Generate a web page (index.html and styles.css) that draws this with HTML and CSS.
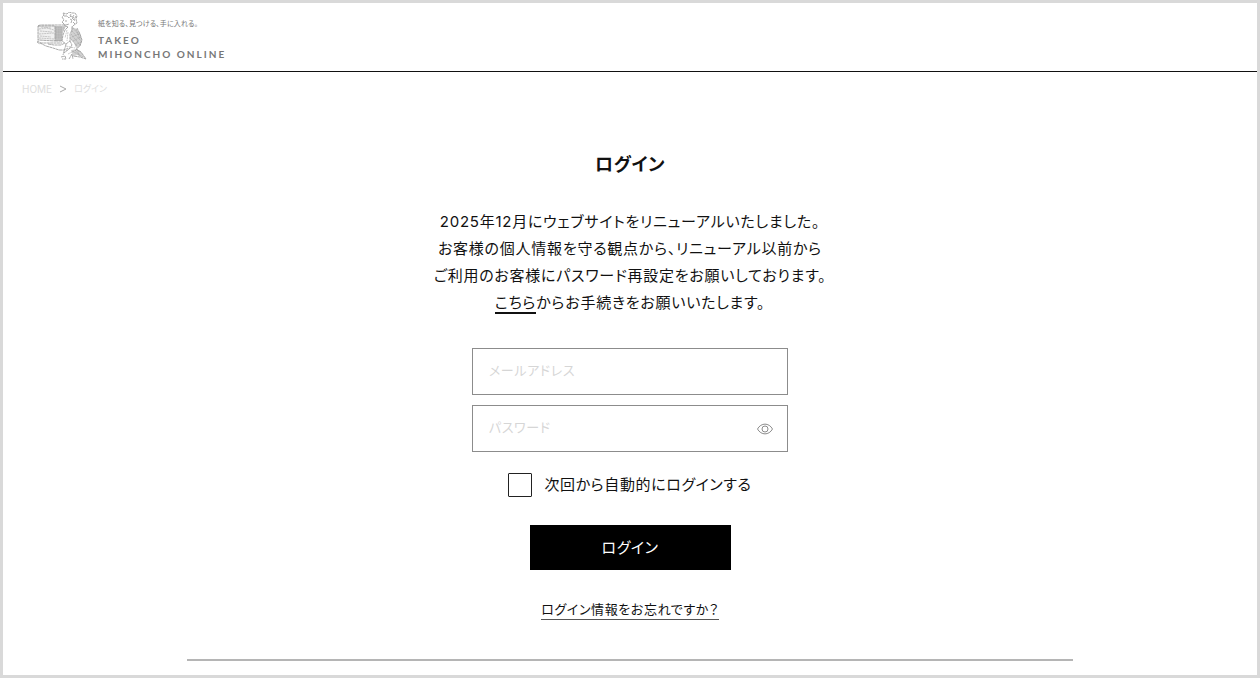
FILE: index.html
```html
<!DOCTYPE html>
<html lang="ja">
<head>
<meta charset="utf-8">
<meta name="viewport" content="width=device-width, initial-scale=1">
<title>ログイン | TAKEO MIHONCHO ONLINE</title>
<link rel="stylesheet" href="styles.css">
</head>
<body>
<header class="header">
  <a class="brand" href="#">
    <svg class="brand-mark" viewBox="0 0 50 48" aria-hidden="true">
      <path class="fill-box" d="M18 14L29 14L26 20L25 29L18 29Z"/>
      <path class="fill-paper" d="M1 14L18 14L18 29L1 28Z"/>
      <path class="fill-coat" d="M35 15L40 17L43 22L45 29L43 34L39 36L37 31L33 27L34 21Z"/>
      <path class="fill-coat" d="M34 38L40 37L44 40L48 46L41 43L36 44Z"/>
      <path class="line" d="M1 14L18 14L18 29L1 28ZM1 14L3 13L29 13M0 29L4 31L25 31M0 30L3 32M18 29L25 29"/>
      <path class="line" d="M3 31L9 34L16 36L22 38L28 38L31 36M11 32L17 33L24 33L28 31"/>
      <path class="hatch" d="M2 17L10 16L17 18M3 19L15 20M2 22L17 21M3 24L14 25M2 26L17 27M4 15L14 16M18 16L28 16M18 18L27 18M18 20L26 20M18 22L26 22M18 24L25 24M18 26L25 26M20 14L20 29M22 14L22 29M24 14L24 29"/>
      <path class="line" d="M27 12L25 10L27 8L25 5L27 3L26 1L30 2L32 0L35 1L38 1L40 4L39 7L40 11L37 13L35 15M27 12L28 14L31 15M27 4L30 4L32 6L34 4L37 6M33 7L35 8L34 11M28 9L30 9M29 13L32 12M37 3L35 6L38 9M34 2L33 4M39 4L37 8M36 10L38 12"/>
      <path class="line" d="M31 15L28 18L26 23L25 29L29 32L33 29L33 22L35 18L35 14M40 16L43 22L45 28L43 34L39 37M29 32L28 36L26 43M33 29L35 33L32 37L27 41M39 37L44 40L49 47L43 45L36 44"/>
      <path class="line" d="M24 45L28 44L29 47L25 47M32 47L35 42L36 47"/>
      <path class="hatch" d="M36 16L42 23M35 19L44 29M34 22L43 33M39 17L43 27M34 27L40 34M35 25L43 21M36 29L44 25M38 33L44 30M35 39L46 45M38 38L44 45M41 38L42 44M30 18L28 26M31 20L30 29M29 34L38 36M29 39L35 35M31 42L39 38"/>
    </svg>
    <span class="brand-text">
      <span class="tagline">紙を知る、見つける、手に入れる。</span>
      <span class="brand-name">TAKEO<br>MIHONCHO ONLINE</span>
    </span>
  </a>
</header>
<nav class="breadcrumb" aria-label="パンくず">
  <a href="#">HOME</a>
  <svg class="chevron" viewBox="0 0 8 8" aria-hidden="true"><path d="M1 1L7 4L1 7"/></svg>
  <span class="current">ログイン</span>
</nav>
<main class="main">
  <h1 class="title">ログイン</h1>
  <p class="notice">2025年12月にウェブサイトをリニューアルいたしました。<br>お客様の個人情報を守る観点から、リニューアル以前から<br>ご利用のお客様にパスワード再設定をお願いしております。<br><a class="reset-link" href="#">こちら</a>からお手続きをお願いいたします。</p>
  <form class="form">
    <div class="fields">
      <input class="field" type="email" aria-label="メールアドレス" placeholder="メールアドレス">
      <div class="password">
        <input class="field" type="password" aria-label="パスワード" placeholder="パスワード">
        <button class="reveal" type="button" aria-label="パスワードを表示">
          <svg viewBox="0 0 16 12" aria-hidden="true"><path d="M.5 6C4-.5 12-.5 15.500 6C12 12.500 4 12.500 .5 6Z"/><circle cx="8" cy="6" r="3"/></svg>
        </button>
      </div>
    </div>
    <label class="remember"><input class="checkbox" type="checkbox"><span>次回から自動的にログインする</span></label>
    <button class="submit" type="submit">ログイン</button>
  </form>
  <a class="forgot" href="#">ログイン情報をお忘れですか？</a>
  <hr class="rule">
</main>
</body>
</html>
```
FILE: styles.css
```css
* {
  box-sizing: border-box;
}

body {
  margin: 0;
  min-height: 100vh;
  border: 3px solid #d9d9d9;
  background: #fff;
  color: #111;
  font-family: Inter, "Noto Sans CJK JP", sans-serif;
  font-feature-settings: "palt";
  font-size: 15px;
  letter-spacing: 0.04em;
}

a {
  color: inherit;
  text-decoration: none;
}

button,
input {
  font: inherit;
  font-feature-settings: inherit;
  letter-spacing: inherit;
}

.header {
  padding: 9px 34px 11px;
  border-bottom: 1px solid #111;
}

.brand {
  display: inline-flex;
  align-items: flex-end;
  gap: 11px;
  vertical-align: top;
  color: #777;
}

.brand-mark {
  width: 50px;
  height: 48px;
  fill: none;
  stroke-linejoin: round;
}

.fill-box {
  fill: #ccc;
}

.fill-paper {
  fill: #f0f0f0;
}

.fill-coat {
  fill: #d2d2d2;
}

.line {
  stroke: #888;
  stroke-width: 0.7;
  stroke-dasharray: 3 0.4;
}

.hatch {
  stroke: #999;
  stroke-width: 0.5;
  stroke-dasharray: 2 0.6;
}

.brand-text {
  display: flex;
  flex-direction: column;
  gap: 4px;
}

.tagline {
  font-size: 7px;
  line-height: 10px;
  letter-spacing: 0.02em;
}

.brand-name {
  margin-bottom: -1px;
  font-family: Lato, sans-serif;
  font-size: 10px;
  font-weight: 700;
  line-height: 14px;
  letter-spacing: 0.2em;
}

.breadcrumb {
  display: flex;
  align-items: center;
  gap: 7px;
  padding: 9px 19px 7px;
  color: #ddd;
  font-size: 10px;
  line-height: 16px;
  letter-spacing: 0;
}

.current {
  font-size: 9px;
}

.chevron {
  width: 8px;
  height: 8px;
  fill: none;
  stroke: #aaa;
}

.main {
  display: flex;
  flex-direction: column;
  align-items: center;
  padding: 45px 24px 12px;
}

.title {
  margin: 0;
  font-size: 18px;
  font-weight: 600;
  line-height: 32px;
}

.notice {
  margin: 27px 0 0;
  letter-spacing: 0.05em;
  line-height: 27px;
  text-align: center;
}

.reset-link {
  border-bottom: 2px solid #111;
}

.form {
  display: flex;
  flex-direction: column;
  align-items: center;
  width: 100%;
  margin-top: 32px;
}

.fields {
  display: grid;
  gap: 10px;
  width: 100%;
  max-width: 316px;
}

.field {
  display: block;
  width: 100%;
  height: 47px;
  padding: 0 16px 3px;
  border: 1px solid #8c8c8c;
  border-radius: 0;
  background: #fff;
  font-size: 13px;
}

.field::placeholder {
  color: #d6d6d6;
}

.password {
  position: relative;
}

.reveal {
  position: absolute;
  top: 0;
  right: 7px;
  display: grid;
  place-items: center;
  width: 32px;
  height: 100%;
  padding: 0;
  border: 0;
  background: none;
}

.reveal svg {
  width: 16px;
  height: 12px;
  fill: none;
  stroke: #8c8c8c;
}

.remember {
  display: flex;
  align-items: center;
  gap: 12px;
  margin-top: 21px;
  line-height: 24px;
}

.checkbox {
  width: 24px;
  height: 24px;
  margin: 0;
  border: 1px solid #222;
  border-radius: 1px;
  appearance: none;
}

.checkbox:checked {
  background: #111;
}

.submit {
  width: 201px;
  height: 45px;
  margin-top: 28px;
  padding: 0 0 3px;
  border: 0;
  background: #000;
  color: #fff;
}

.forgot {
  margin-top: 29px;
  border-bottom: 1px solid #555;
  font-size: 13px;
  line-height: 20px;
}

.rule {
  width: 100%;
  max-width: 886px;
  height: 2px;
  margin: 39px 0 0;
  border: 0;
  background: #b5b5b5;
}
```
